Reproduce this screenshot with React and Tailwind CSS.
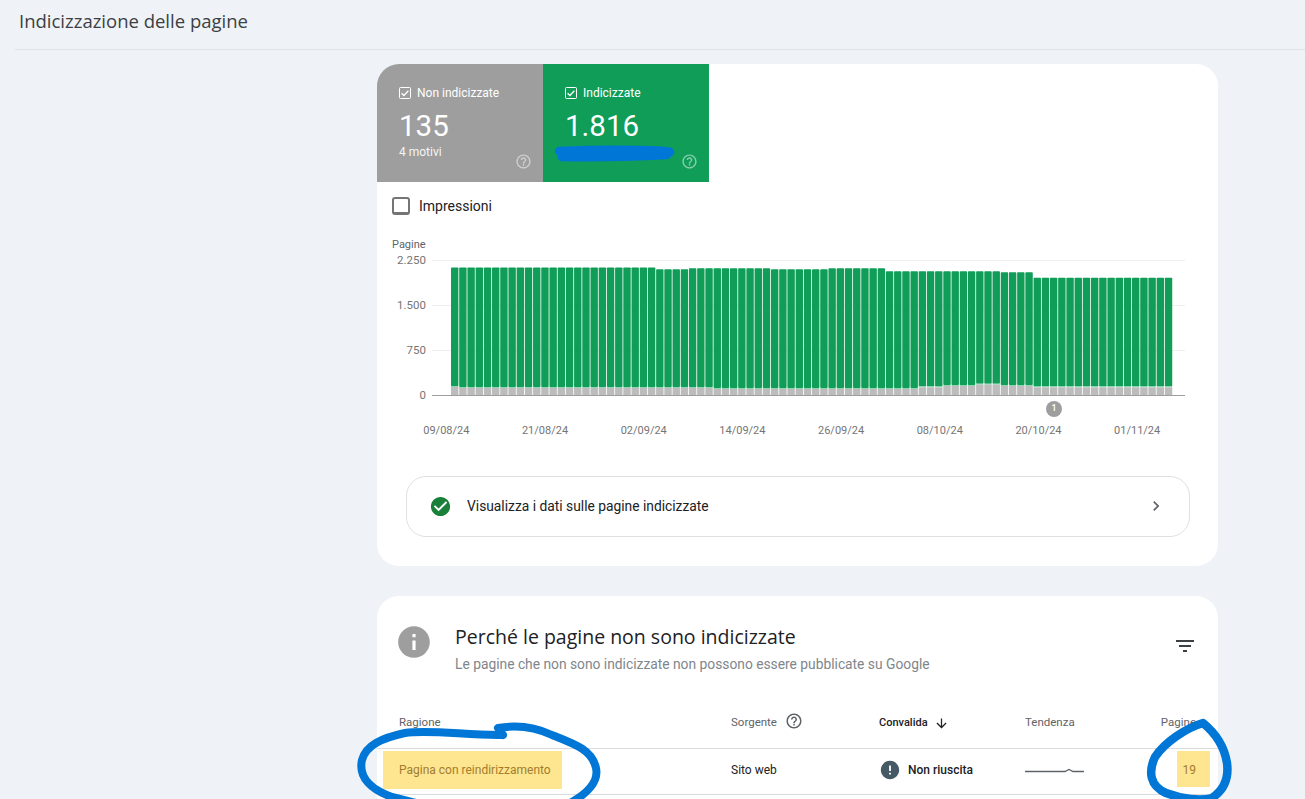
import React from "react";

const BAR_COUNT = 88;
const BAR_STEP = 8.205;
const PLOT_Y = 255;

// top edge (page y) of the green part, per run of bars
const greenRuns = [
  [25, 267.5],
  [4, 269.3],
  [10, 268.3],
  [7, 269.3],
  [7, 268.3],
  [14, 271.3],
  [4, 272.3],
  [17, 277.7],
];

// top edge (page y) of the grey part, per run of bars
const greyRuns = [
  [1, 386],
  [31, 387],
  [25, 388],
  [3, 386.5],
  [4, 385],
  [3, 383.7],
  [4, 385],
  [17, 386.5],
];

const expand = (runs) => runs.flatMap(([count, y]) => Array(count).fill(y));
const greenTops = expand(greenRuns).slice(0, BAR_COUNT);
const greyTops = expand(greyRuns);

const dates = ["09/08/24", "21/08/24", "02/09/24", "14/09/24", "26/09/24", "08/10/24", "20/10/24", "01/11/24"];
const yLabels = ["2.250", "1.500", "750", "0"];

const MaterialIcon = ({ d, className }) => (
  <svg viewBox="0 0 24 24" fill="currentColor" className={className}>
    <path d={d} />
  </svg>
);

const HELP = "M11 18h2v-2h-2v2zm1-16C6.48 2 2 6.48 2 12s4.48 10 10 10 10-4.48 10-10S17.52 2 12 2zm0 18c-4.41 0-8-3.59-8-8s3.59-8 8-8 8 3.59 8 8-3.59 8-8 8zm0-14c-2.21 0-4 1.79-4 4h2c0-1.1.9-2 2-2s2 .9 2 2c0 2-3 1.75-3 5h2c0-2.25 3-2.5 3-5 0-2.21-1.79-4-4-4z";
const CHECK_CIRCLE = "M12 2C6.48 2 2 6.48 2 12s4.48 10 10 10 10-4.48 10-10S17.52 2 12 2zm-2 15l-5-5 1.41-1.41L10 14.17l7.59-7.59L19 8l-9 9z";
const CHEVRON = "M10 6L8.59 7.41 13.17 12l-4.58 4.59L10 18l6-6z";
const FILTER = "M10 18h4v-2h-4v2zM3 6v2h18V6H3zm3 7h12v-2H6v2z";
const ARROW_DOWN = "M20 12l-1.41-1.41L13 16.17V4h-2v12.17l-5.58-5.6L4 12l8 8 8-8z";
const INFO = "M12 2C6.48 2 2 6.48 2 12s4.48 10 10 10 10-4.48 10-10S17.52 2 12 2zm1 15h-2v-6h2v6zm0-8h-2V7h2v2z";
const ERROR = "M12 2C6.48 2 2 6.48 2 12s4.48 10 10 10 10-4.48 10-10S17.52 2 12 2zm1 15h-2v-2h2v2zm0-4h-2V7h2v6z";

const TileCheck = () => (
  <svg viewBox="0 0 12 12" className="w-3 h-3 shrink-0" fill="none" stroke="white">
    <rect x="0.5" y="0.5" width="11" height="11" rx="1" />
    <path d="M2.6 6.2l2.3 2.3 4.5-4.8" strokeWidth="1.3" />
  </svg>
);

const Tile = ({ color, label, value, note }) => (
  <div className={`relative w-[166px] h-[118px] pl-[22px] pt-[22px] text-white ${color}`}>
    <div className="flex items-center gap-[6px] text-xs leading-[14px]">
      <TileCheck />
      <span>{label}</span>
    </div>
    <div className="mt-[9px] text-[29.5px] leading-[34px]">{value}</div>
    {note && <div className="mt-[2px] text-xs leading-[14px] opacity-90">{note}</div>}
    <MaterialIcon d={HELP} className="absolute right-[11px] bottom-[12px] w-[17px] h-[17px] text-white/50" />
  </div>
);

const Chart = () => (
  <div className="relative flex pl-[15px] mt-[22px]">
    <div className="w-[34px] shrink-0 pt-[1px] text-[11px] leading-[14px] text-[#5f6368]">
      <div>Pagine</div>
      <div className="mt-[1px] flex flex-col gap-[31px] items-end text-[11.5px] text-[#757575]">
        {yLabels.map((label) => (
          <div key={label}>{label}</div>
        ))}
      </div>
    </div>
    <svg width="753" height="145" className="ml-[6px] mt-[18px] shrink-0">
      {[5, 50, 95].map((y) => (
        <rect key={y} x="0" y={y} width="753" height="1" fill="#eeeeee" />
      ))}
      {greenTops.map((top, i) => {
        const x = 19 + i * BAR_STEP;
        const greenY = top - PLOT_Y;
        const greyY = greyTops[i] - PLOT_Y;
        return (
          <g key={i}>
            <rect x={x} y={greenY} width="7.4" height={greyY - greenY} rx="0.8" fill="#0f9d58" />
            <rect x={x} y={greyY} width="7.4" height="1" fill="#8fd3b1" />
            <rect x={x} y={greyY + 1} width="7.4" height={139 - greyY} fill="#bcbcbc" />
          </g>
        );
      })}
      <rect x="0" y="140" width="753" height="1" fill="#9e9e9e" />
    </svg>
    <div className="absolute left-[669px] top-[164px] w-4 h-4 rounded-full bg-[#9e9e9e] flex items-center justify-center text-white text-[9px] font-medium">
      1
    </div>
  </div>
);

const Scribbles = () => (
  <svg width="1305" height="799" className="absolute inset-0 pointer-events-none" fill="none" stroke="#0077d6" strokeLinecap="round" strokeLinejoin="round">
    <path d="M559 151 Q600 149 640 150 T667 153 M562 157 Q610 158 667 155" strokeWidth="8.5" />
    <path d="M503 735 C470 736 430 729 405 733 C382 738 366 745 362 760 C358 778 372 790 392 797 L420 804 M503 735 L498 728 C515 725 535 727 552 735 C575 744 592 750 596 768 C599 782 586 794 572 802" strokeWidth="8" />
    <path d="M1203 723 C1186 728 1165 742 1155 757 C1148 772 1150 786 1166 793 C1182 799 1200 801 1212 798 C1224 790 1229 778 1227 763 C1224 744 1214 732 1203 723 Z" strokeWidth="8.5" />
  </svg>
);

export default function App() {
  return (
    <div className="relative h-[799px] overflow-hidden bg-[#eff3f8] font-['Roboto',sans-serif] text-[#202124]">
      {/* Page title */}
      <div className="ml-[15px] h-[50px] border-b border-[#dfe3e8] pl-1 pt-[9px]">
        <h1 className="font-['Open_Sans',sans-serif] text-[18.5px] leading-6 text-[#3c4043]">Indicizzazione delle pagine</h1>
      </div>

      <div className="pl-[377px] pr-[87px] pt-[14px]">
        {/* Summary card */}
        <section className="h-[502px] rounded-[22px] overflow-hidden bg-white">
          <div className="flex">
            <Tile color="bg-[#9e9e9e]" label="Non indicizzate" value="135" note="4 motivi" />
            <Tile color="bg-[#0f9d58]" label="Indicizzate" value="1.816" />
          </div>

          <div className="flex items-center gap-[9px] pl-[15px] mt-[15px] h-[18px]">
            <div className="w-[18px] h-[18px] rounded-[3px] border-2 border-b-[3px] border-[#757575]" />
            <span className="text-sm">Impressioni</span>
          </div>

          <Chart />

          <div className="flex pl-[20px] mt-[22px] text-[11px] leading-[14px] text-[#757575]">
            {dates.map((date) => (
              <div key={date} className="w-[98.7px] text-center">{date}</div>
            ))}
          </div>

          <div className="ml-[29px] mt-[38px] w-[784px] h-[61px] rounded-[20px] border border-[#e0e0e0] flex items-center pl-[22px] pr-[23px] pb-[1px]">
            <MaterialIcon d={CHECK_CIRCLE} className="w-[23px] h-[23px] text-[#188038]" />
            <span className="ml-[15px] text-[13.8px] flex-1">Visualizza i dati sulle pagine indicizzate</span>
            <MaterialIcon d={CHEVRON} className="w-5 h-5 text-[#5f6368]" />
          </div>
        </section>

        {/* Reasons card */}
        <section className="mt-[30px] h-[300px] rounded-t-[22px] bg-white">
          <div className="flex items-start pl-[19px] pr-[22px] pt-[27px] h-[108px]">
            <MaterialIcon d={INFO} className="w-[38px] h-[38px] -ml-[1px] text-[#9e9e9e]" />
            <div className="ml-[22px] flex-1">
              <h2 className="font-['Open_Sans',sans-serif] text-[19.5px] leading-[28px]">Perché le pagine non sono indicizzate</h2>
              <p className="mt-[3px] text-[13.8px] leading-5 text-[#80868b]">Le pagine che non sono indicizzate non possono essere pubblicate su Google</p>
            </div>
            <MaterialIcon d={FILTER} className="w-6 h-6 mt-[11px] -mr-[1px] text-[#3c4043]" />
          </div>

          <div className="grid grid-cols-[332px_148px_146px_1fr] items-start h-[45px] pt-[11px] pl-[22px] pr-[22px] border-b border-[#dadce0] text-[11.5px] leading-[14px] text-[#5f6368]">
            <span>Ragione</span>
            <span className="flex items-center gap-[8px] h-[14px]">
              Sorgente
              <MaterialIcon d={HELP} className="w-[18px] h-[18px] -mt-[2px]" />
            </span>
            <span className="flex items-center gap-[6px] h-[14px] mt-[1px] text-[11px] font-medium text-[#202124]">
              Convalida
              <MaterialIcon d={ARROW_DOWN} className="w-[15px] h-[15px]" />
            </span>
            <span className="flex justify-between">
              Tendenza
              <span>Pagine</span>
            </span>
          </div>

          <div className="relative grid grid-cols-[332px_148px_146px_1fr] items-center h-[46px] pl-[22px] pr-[22px] pb-[3px] border-b border-[#dadce0] text-xs">
            <span className="relative">
              <span className="absolute -left-[16px] -top-[11px] w-[179px] h-[38px] bg-[#fde68f]" />
              <span className="relative text-[#a47c2e]">Pagina con reindirizzamento</span>
            </span>
            <span>Sito web</span>
            <span className="flex items-center gap-[8px] font-medium">
              <MaterialIcon d={ERROR} className="w-[22px] h-[22px] -mr-[1px] text-[#455a64]" />
              Non riuscita
            </span>
            <span className="flex items-center justify-between">
              <svg width="60" height="10" fill="none" stroke="#5f6368" strokeWidth="1.3">
                <path d="M0 6.5H40L44 4.5L48 6.5H59" />
              </svg>
              <span className="relative">
                <span className="absolute -left-[6px] -top-[11px] w-[33px] h-[36px] bg-[#fde68f]" />
                <span className="relative text-[#a47c2e]">19</span>
              </span>
            </span>
          </div>
        </section>
      </div>

      <Scribbles />
    </div>
  );
}
